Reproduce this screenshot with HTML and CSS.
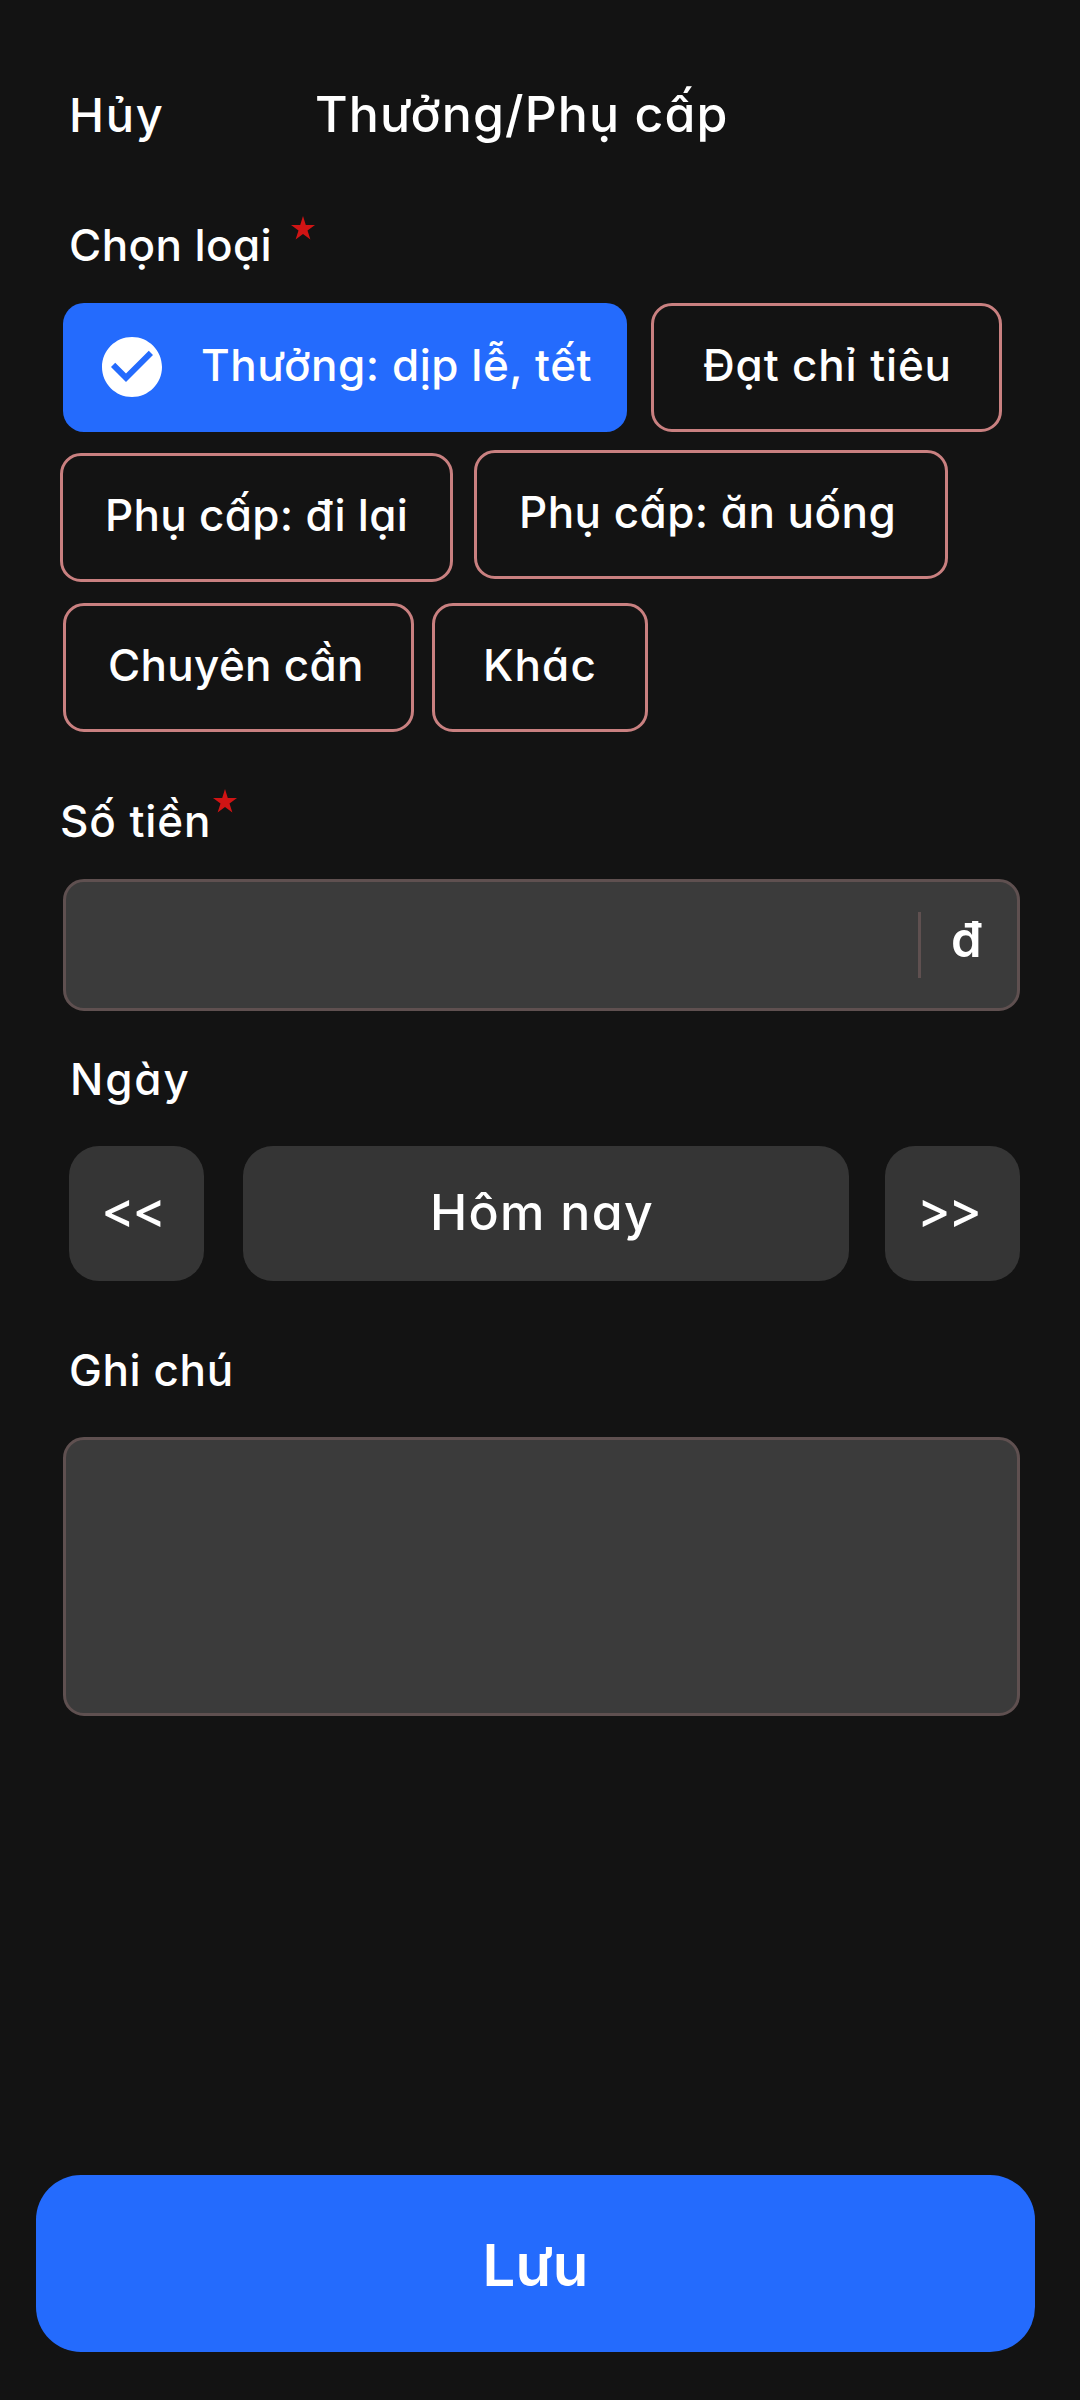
FILE: index.html
```html
<!DOCTYPE html>
<html lang="vi">
<head>
<meta charset="utf-8">
<title>Thưởng/Phụ cấp</title>
<link rel="stylesheet" href="styles.css">
</head>
<body>
<main class="screen">
  <header class="topbar">
    <a class="cancel">Hủy</a>
    <h1 class="title">Thưởng/Phụ cấp</h1>
  </header>

  <div class="label label-type">
    <span class="label-text">Chọn loại</span>
    <svg class="star" viewBox="0 0 24 24"><path d="M12 0l2.800 8.900H24l-7.500 5.600 2.900 9L12 18l-7.400 5.500 2.900-9L0 8.900h9.200z"/></svg>
  </div>

  <div class="chips row-1">
    <button class="chip selected">
      <svg class="check" viewBox="2 2 20 20"><path d="M12 2C6.480 2 2 6.480 2 12s4.480 10 10 10 10-4.480 10-10S17.520 2 12 2zm-2 15l-5-5 1.410-1.410L10 14.170l7.590-7.590L19 8l-9 9z"/></svg>
      <span>Thưởng: dịp lễ, tết</span>
    </button>
    <button class="chip target">Đạt chỉ tiêu</button>
  </div>
  <div class="chips row-2">
    <button class="chip travel">Phụ cấp: đi lại</button>
    <button class="chip meal">Phụ cấp: ăn uống</button>
  </div>
  <div class="chips row-3">
    <button class="chip diligence">Chuyên cần</button>
    <button class="chip other">Khác</button>
  </div>

  <div class="label label-amount">
    <span class="label-text">Số tiền</span>
    <svg class="star" viewBox="0 0 24 24"><path d="M12 0l2.800 8.900H24l-7.500 5.600 2.900 9L12 18l-7.400 5.500 2.900-9L0 8.900h9.200z"/></svg>
  </div>
  <div class="field amount"><span class="unit">đ</span></div>

  <div class="label label-date">Ngày</div>
  <div class="dates">
    <button class="day prev">&lt;&lt;</button>
    <button class="day today">Hôm nay</button>
    <button class="day next">&gt;&gt;</button>
  </div>

  <div class="label label-note">Ghi chú</div>
  <div class="field note"></div>

  <button class="save">Lưu</button>
</main>
</body>
</html>
```
FILE: styles.css
```css
* { box-sizing: border-box; }

body {
  margin: 0;
  background: #131313;
  color: #fff;
  font-family: Inter, "Noto Sans", sans-serif;
  font-size: 44px;
  font-weight: 450;
  font-feature-settings: "cv11" 1;
}

button {
  margin: 0;
  border: 0;
  padding: 0;
  background: none;
  color: inherit;
  font: inherit;
  font-feature-settings: inherit;
  white-space: nowrap;
}

.screen {
  display: flex;
  flex-direction: column;
  width: 1080px;
  height: 2400px;
}

.topbar {
  display: flex;
  align-items: baseline;
  height: 60px;
  margin-top: 84px;
  padding-left: 69px;
  line-height: 60px;
}
.cancel { width: 246px; font-size: 47px; letter-spacing: 1.7px; }
.title { margin: 0; font-size: 50px; font-weight: inherit; letter-spacing: 1.1px; }

.label {
  display: flex;
  height: 60px;
  line-height: 60px;
}
.label-text { flex: none; }
.label-type { margin-top: 71px; padding-left: 69px; letter-spacing: 0.4px; }
.label-type .label-text { width: 222px; }
.star { width: 24px; height: 24px; fill: #d01414; }
.label-type .star { margin-top: 1px; }

.chips { display: flex; height: 129px; }
.row-1 { margin-top: 28px; padding-left: 63px; gap: 24px; }
.row-2 { height: 132px; margin-top: 18px; padding-left: 60px; gap: 21px; }
.row-3 { margin-top: 21px; padding-left: 63px; gap: 18px; }

.chip {
  display: flex;
  align-items: center;
  height: 129px;
  border: 3px solid #c98080;
  border-radius: 21px;
  padding-bottom: 5px;
}
.chip.selected {
  width: 564px;
  border: 0;
  padding-left: 39px;
  background: #246bfd;
  letter-spacing: 0.55px;
}
.check { width: 60px; height: 60px; margin: 3px 39px 0 0; fill: #fff; }
.target { width: 351px; padding-left: 49px; letter-spacing: 0.85px; }
.travel { width: 393px; padding-left: 42px; margin-top: 3px; letter-spacing: 0.3px; }
.meal { width: 474px; padding-left: 42px; letter-spacing: 0.45px; }
.diligence { width: 351px; padding-left: 42px; letter-spacing: 0.3px; }
.other { width: 216px; padding-left: 48px; letter-spacing: 1.2px; }

.label-amount { margin-top: 59px; padding-left: 60px; letter-spacing: 0.9px; }
.label-amount .label-text { width: 153px; }
.label-amount .star { margin-top: -2px; }

.field {
  margin-left: 63px;
  width: 957px;
  border: 3px solid #5f5050;
  border-radius: 21px;
  background: #3b3b3b;
}
.amount {
  display: flex;
  justify-content: flex-end;
  height: 132px;
  margin-top: 28px;
  padding: 30px 0;
}
.unit {
  width: 99px;
  height: 66px;
  border-left: 3px solid #5f5050;
  padding-left: 30px;
  font-size: 49px;
  font-weight: 600;
  line-height: 55px;
}

.label-date { margin-top: 38px; padding-left: 70px; letter-spacing: 1.9px; }
.dates { display: flex; margin-top: 37px; padding-left: 69px; }
.day {
  width: 135px;
  height: 135px;
  border-radius: 30px;
  padding-bottom: 4px;
  background: #353535;
  font-size: 50px;
}
.prev, .next { padding-right: 8px; padding-bottom: 9px; font-weight: 500; letter-spacing: -2px; }
.today { width: 606px; margin: 0 36px 0 39px; padding-right: 8px; letter-spacing: 1.3px; }

.label-note { margin-top: 59px; padding-left: 69px; letter-spacing: 0.6px; }
.note { height: 279px; margin-top: 37px; }

.save {
  width: 999px;
  height: 177px;
  margin: 459px 0 0 36px;
  border-radius: 45px;
  padding-top: 2px;
  background: #246bfd;
  font-size: 58px;
  font-weight: 600;
}
```
